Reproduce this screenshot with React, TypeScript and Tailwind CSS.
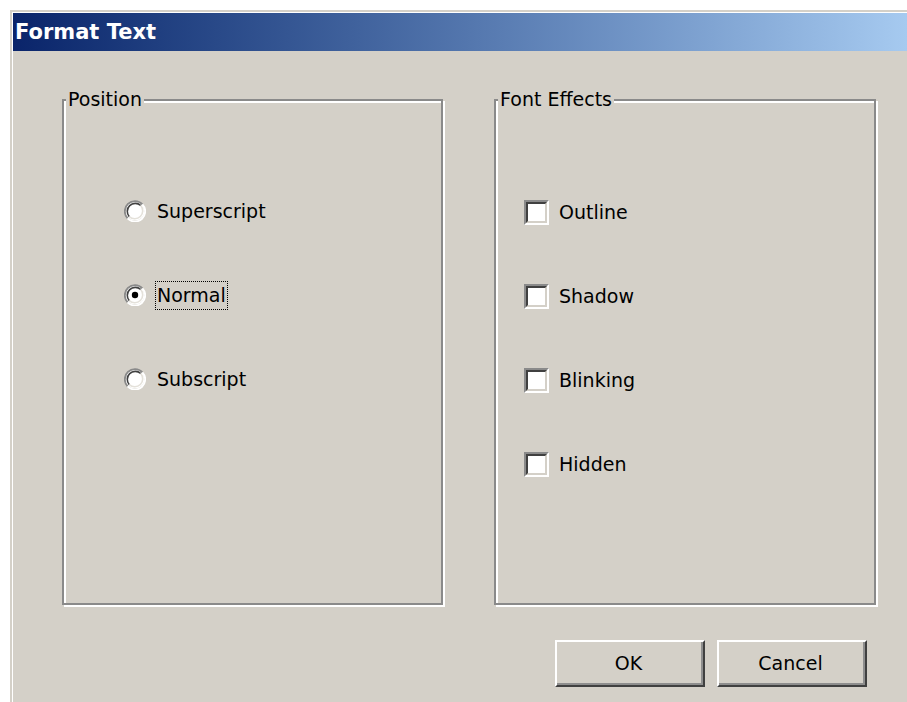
import React from "react";

const FONT = { fontFamily: '"DejaVu Sans", Verdana, sans-serif' };

function Radio({ checked }: { checked?: boolean }) {
  return (
    <svg width="22" height="22" viewBox="0 0 22 22" className="shrink-0">
      <circle cx="11" cy="11" r="9.5" fill="#ffffff" />
      {/* sunken ring: dark on the upper left, light on the lower right */}
      <path d="M18.4 4.3 A10 10 0 0 0 3.6 18.4" fill="none" stroke="#8a8a8a" strokeWidth="1.8" />
      <path d="M16.7 5.5 A8 8 0 0 0 5.3 16.7" fill="none" stroke="#404040" strokeWidth="1.6" />
      <path d="M3.6 18.4 A10 10 0 0 0 18.4 4.3" fill="none" stroke="#ffffff" strokeWidth="1.8" />
      <path d="M5.3 16.7 A8 8 0 0 0 16.7 5.5" fill="none" stroke="#e4e1da" strokeWidth="1.6" />
      {checked && <circle cx="11" cy="11" r="3.2" fill="#000000" />}
    </svg>
  );
}

function Checkbox() {
  return (
    <div className="w-[25px] h-[25px] shrink-0 border-t-2 border-l-2 border-[#8a8a8a] border-r-2 border-b-2 border-r-white border-b-white">
      <div className="w-full h-full bg-white border-t-2 border-l-2 border-[#404040] border-r-2 border-b-2 border-r-[#d4d0c8] border-b-[#d4d0c8]" />
    </div>
  );
}

function GroupBox({
  title,
  children,
  className,
}: {
  title: string;
  children: React.ReactNode;
  className?: string;
}) {
  return (
    <div
      className={`relative border-2 border-[#8a8a8a] shadow-[inset_2px_2px_0_#ffffff,2px_2px_0_#ffffff] ${className ?? ""}`}
    >
      <span className="absolute -top-[14px] left-[2px] bg-[#d4d0c8] px-[2px] text-[19px] leading-[24px] text-black">
        {title}
      </span>
      {children}
    </div>
  );
}

function Button({ label }: { label: string }) {
  return (
    <button className="w-[150px] h-[47px] bg-[#d4d0c8] border-t-2 border-l-2 border-white border-r-2 border-b-2 border-r-[#404040] border-b-[#404040] shadow-[inset_-2px_-2px_0_#8e8e8e] text-[19px] text-black flex items-center justify-center pr-[3px]">
      {label}
    </button>
  );
}

export default function App() {
  const positions = [
    { label: "Superscript", checked: false },
    { label: "Normal", checked: true },
    { label: "Subscript", checked: false },
  ];
  const effects = ["Outline", "Shadow", "Blinking", "Hidden"];

  return (
    <div className="w-[907px] h-[702px] bg-white pl-[10px] pt-[10px] overflow-hidden" style={FONT}>
      <div className="h-full border-t-2 border-l-2 border-[#d4d0c8]">
        <div className="h-full border-t border-l border-white flex flex-col">
          {/* caption bar */}
          <div className="h-[38px] shrink-0 bg-gradient-to-r from-[#0a246a] to-[#a6caf0] flex items-center pl-[2px]">
            <span className="text-white font-bold text-[21px] leading-none">Format Text</span>
          </div>

          {/* dialog body */}
          <div className="flex-1 bg-[#d4d0c8] pl-[49px] pt-[48px]">
            <div className="flex gap-[51px]">
              <GroupBox title="Position" className="w-[381px] h-[506px]">
                <div className="flex flex-col gap-[62px] pt-[99px] pl-[60px]">
                  {positions.map((p) => (
                    <div key={p.label} className="flex items-center h-[22px]">
                      <Radio checked={p.checked} />
                      {p.checked ? (
                        <span className="ml-[9px] border border-dotted border-black px-[1px] text-[19px] leading-[27px]">
                          {p.label}
                        </span>
                      ) : (
                        <span className="ml-[11px] text-[19px] leading-[27px]">{p.label}</span>
                      )}
                    </div>
                  ))}
                </div>
              </GroupBox>

              <GroupBox title="Font Effects" className="w-[382px] h-[506px]">
                <div className="flex flex-col gap-[59px] pt-[99px] pl-[28px]">
                  {effects.map((e) => (
                    <div key={e} className="flex items-center h-[25px]">
                      <Checkbox />
                      <span className="ml-[10px] text-[19px] leading-[27px]">{e}</span>
                    </div>
                  ))}
                </div>
              </GroupBox>
            </div>

            <div className="flex gap-[12px] pl-[493px] pt-[35px]">
              <Button label="OK" />
              <Button label="Cancel" />
            </div>
          </div>
        </div>
      </div>
    </div>
  );
}
